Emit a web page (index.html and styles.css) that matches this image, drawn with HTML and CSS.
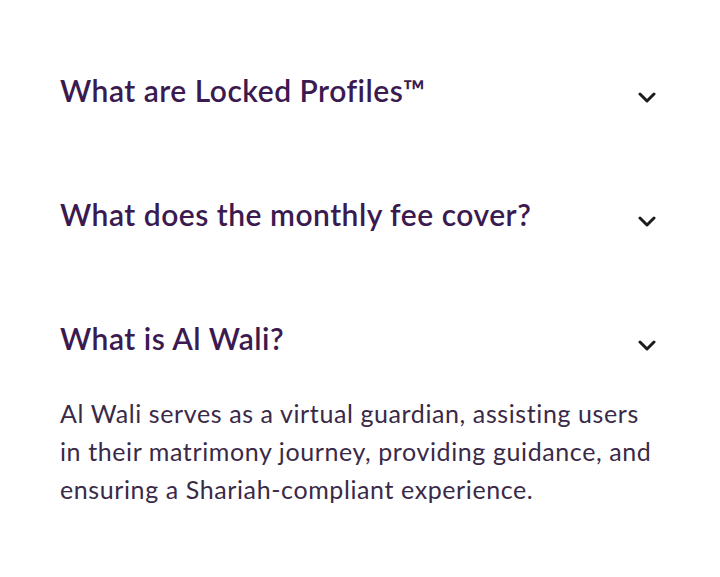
FILE: index.html
```html
<!DOCTYPE html>
<html lang="en">
<head>
  <meta charset="UTF-8" />
  <title>FAQ</title>
  <link rel="stylesheet" href="styles.css">
</head>
<body>
  <div class="faq">
    <div class="item">
      <div class="question">
        <h3>What are Locked Profiles™</h3>
        <svg class="chev" viewBox="0 0 18 11" width="18" height="11"><path d="M2 2 L9 9 L16 2" /></svg>
      </div>
    </div>
    <div class="item">
      <div class="question">
        <h3>What does the monthly fee cover?</h3>
        <svg class="chev" viewBox="0 0 18 11" width="18" height="11"><path d="M2 2 L9 9 L16 2" /></svg>
      </div>
    </div>
    <div class="item open">
      <div class="question">
        <h3>What is Al Wali?</h3>
        <svg class="chev" viewBox="0 0 18 11" width="18" height="11"><path d="M2 2 L9 9 L16 2" /></svg>
      </div>
      <p class="answer">Al Wali serves as a virtual guardian, assisting users in their matrimony journey, providing guidance, and ensuring a Shariah-compliant experience.</p>
    </div>
  </div>
</body>
</html>
```
FILE: styles.css
```css
body {
  margin: 0;
  background: #fff;
  font-family: Lato, 'Noto Sans', sans-serif;
}
.faq {
  padding: 68px 60px 0 60px;
}
.item { margin-bottom: 80px; }
.item.open { margin-bottom: 0; }
.question {
  display: flex;
  justify-content: space-between;
  align-items: center;
  height: 44px;
}
.question h3 {
  margin: 0;
  font-size: 30px;
  font-weight: 600;
  letter-spacing: 0.5px;
  color: #3b1a50;
  line-height: 44px;
}
.chev {
  margin-right: 4px;
  margin-top: 15px;
  fill: none;
  stroke: #1c1c1c;
  stroke-width: 3;
  stroke-linecap: round;
  stroke-linejoin: round;
}
.answer {
  margin: 34px 0 0 0;
  font-size: 25px;
  line-height: 38px;
  letter-spacing: 0.6px;
  color: #3a2a48;
}
```
